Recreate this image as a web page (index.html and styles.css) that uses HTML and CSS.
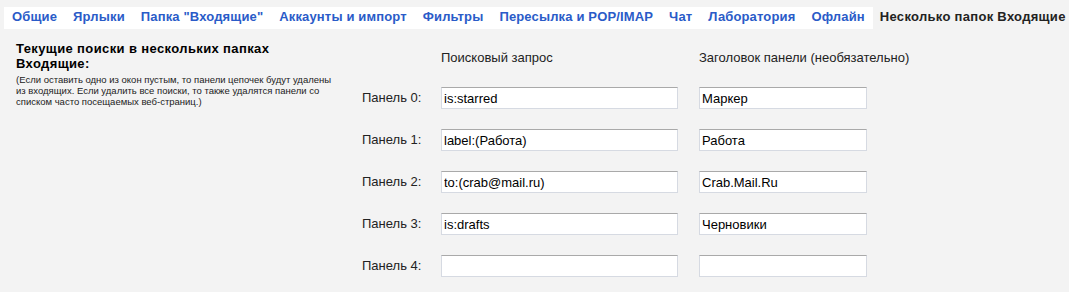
FILE: index.html
```html
<!DOCTYPE html>
<html lang="ru">
<head>
<meta charset="utf-8">
<title>Несколько папок Входящие</title>
<link rel="stylesheet" href="styles.css">
</head>
<body>
<nav class="tabs">
  <div class="tab-links">
    <a class="tab" href="#">Общие</a>
    <a class="tab" href="#">Ярлыки</a>
    <a class="tab" href="#">Папка "Входящие"</a>
    <a class="tab" href="#">Аккаунты и импорт</a>
    <a class="tab" href="#">Фильтры</a>
    <a class="tab" href="#">Пересылка и POP/IMAP</a>
    <a class="tab" href="#">Чат</a>
    <a class="tab" href="#">Лаборатория</a>
    <a class="tab" href="#">Офлайн</a>
  </div>
  <span class="tab tab-active">Несколько папок Входящие</span>
</nav>
<form class="settings">
  <div class="intro">
    <div class="intro-title">Текущие поиски в нескольких папках Входящие:</div>
    <div class="intro-note">(Если оставить одно из окон пустым, то панели цепочек будут удалены из входящих. Если удалить все поиски, то также удалятся панели со списком часто посещаемых веб-страниц.)</div>
  </div>
  <div class="col-head col-label"></div>
  <div class="col-head col-query">Поисковый запрос</div>
  <div class="col-head col-title">Заголовок панели (необязательно)</div>

  <label class="pane-label">Панель 0:</label>
  <input class="field field-query" type="text" value="is:starred">
  <input class="field field-title" type="text" value="Маркер">

  <label class="pane-label">Панель 1:</label>
  <input class="field field-query" type="text" value="label:(Работа)">
  <input class="field field-title" type="text" value="Работа">

  <label class="pane-label">Панель 2:</label>
  <input class="field field-query" type="text" value="to:(crab@mail.ru)">
  <input class="field field-title" type="text" value="Crab.Mail.Ru">

  <label class="pane-label">Панель 3:</label>
  <input class="field field-query" type="text" value="is:drafts">
  <input class="field field-title" type="text" value="Черновики">

  <label class="pane-label">Панель 4:</label>
  <input class="field field-query" type="text" value="">
  <input class="field field-title" type="text" value="">
</form>
</body>
</html>
```

FILE: styles.css
```css
html, body {
  margin: 0;
  padding: 0;
}

body {
  background: #f3f3f3;
  font-family: "Liberation Sans", Arial, sans-serif;
  font-size: 13px;
  color: #222;
}

.tabs {
  display: flex;
  align-items: stretch;
  height: 22px;
  margin: 7px 0 0 4px;
}

.tab-links {
  display: flex;
  background: #fff;
}

.tab {
  display: block;
  padding: 0 8px;
  font-weight: bold;
  font-size: 13px;
  line-height: 19px;
  letter-spacing: 0.15px;
  color: #2a5bc8;
  text-decoration: none;
  white-space: nowrap;
}

.tab-active {
  color: #222;
  padding-left: 7px;
  letter-spacing: 0.3px;
}

.settings {
  display: grid;
  grid-template-columns: 346px 79px 258px 168px;
  grid-template-rows: 27px repeat(5, 22px);
  row-gap: 20px;
  margin-top: 11px;
  padding-left: 16px;
}

.intro {
  grid-column: 1;
  grid-row: 1 / span 6;
  padding-top: 1px;
}

.intro-title {
  font-weight: bold;
  font-size: 13px;
  line-height: 15px;
  letter-spacing: 0.38px;
  color: #000;
  width: 280px;
}

.intro-note {
  margin-top: 3px;
  font-size: 9.5px;
  line-height: 11px;
  color: #222;
  width: 325px;
}

.col-head {
  grid-row: 1;
  padding-top: 10px;
  line-height: 16px;
  color: #222;
  white-space: nowrap;
}

.col-label {
  grid-column: 2;
}

.col-query {
  grid-column: 3;
}

.col-title {
  grid-column: 4;
}

.pane-label {
  grid-column: 2;
  line-height: 22px;
  color: #222;
}

.field {
  box-sizing: border-box;
  height: 22px;
  margin: 0;
  padding: 0 2px;
  border: 1px solid #d6dae2;
  border-top-color: #a9a9a9;
  background: #fff;
  font-family: "Liberation Sans", Arial, sans-serif;
  font-size: 13px;
  color: #000;
  outline: none;
}

.field-query {
  grid-column: 3;
  width: 237px;
}

.field-title {
  grid-column: 4;
  width: 168px;
}
```
